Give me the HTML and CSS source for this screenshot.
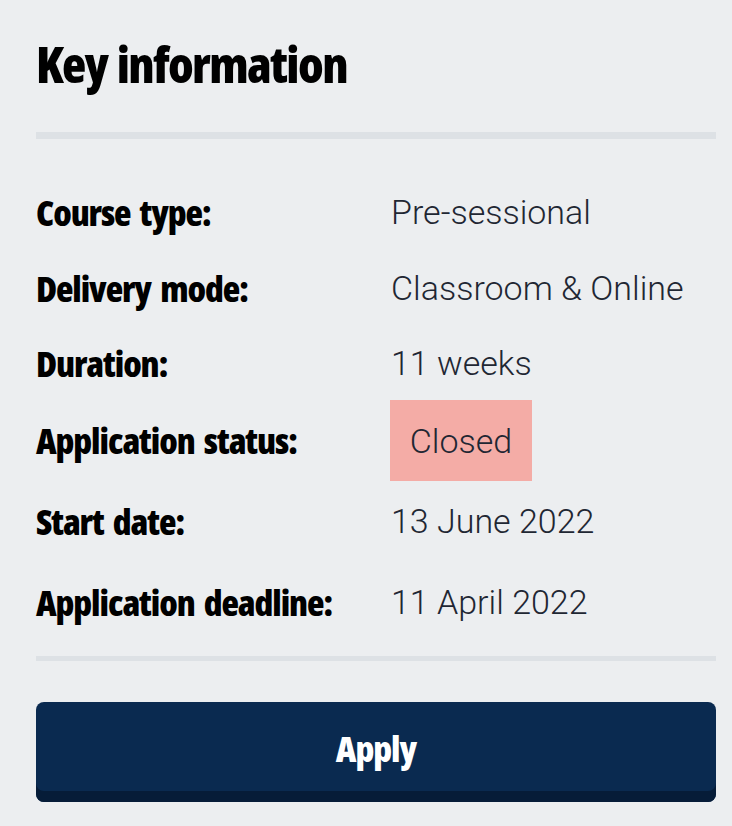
FILE: index.html
```html
<!DOCTYPE html>
<html lang="en">
<head>
<meta charset="utf-8">
<title>Key information</title>
<link rel="stylesheet" href="styles.css">
</head>
<body>
<section class="card">
  <h2 class="title">Key information</h2>
  <hr class="divider divider-top">
  <dl class="facts">
    <div class="row"><dt>Course type:</dt><dd>Pre-sessional</dd></div>
    <div class="row"><dt>Delivery mode:</dt><dd>Classroom &amp; Online</dd></div>
    <div class="row row-short"><dt>Duration:</dt><dd>11 weeks</dd></div>
    <div class="row row-status"><dt>Application status:</dt><dd><span class="badge">Closed</span></dd></div>
    <div class="row row-tall"><dt>Start date:</dt><dd>13 June 2022</dd></div>
    <div class="row row-taller"><dt>Application deadline:</dt><dd>11 April 2022</dd></div>
  </dl>
  <hr class="divider divider-bottom">
  <button class="apply" type="button">Apply</button>
</section>
</body>
</html>
```
FILE: styles.css
```css
html, body {
  margin: 0;
  padding: 0;
  background: #eceef0;
}
body {
  width: 732px;
  height: 826px;
  overflow: hidden;
}
.card {
  padding: 36px 16px 0 36px;
  display: flex;
  flex-direction: column;
}
.title {
  margin: 0;
  font-family: "Open Sans", "DejaVu Sans Condensed", sans-serif;
  font-stretch: 75%;
  font-weight: 800;
  font-size: 50px;
  line-height: 56px;
  color: #000;
  letter-spacing: -1.6px;
  word-spacing: 2px;
}
.divider {
  border: 0;
  background: #dde1e5;
  margin: 0;
}
.divider-top {
  height: 7px;
  margin-top: 40px;
}
.facts {
  margin: 35px 0 0 0;
  padding: 0;
}
.row {
  display: grid;
  grid-template-columns: 355px 1fr;
  align-items: center;
  height: 76px;
}
.row-short { height: 74px; }
.row-status { height: 81px; }
.row-tall { height: 80px; }
.row-taller { height: 82px; }
dt {
  font-family: "Open Sans", "DejaVu Sans Condensed", sans-serif;
  font-stretch: 75%;
  font-weight: 800;
  font-size: 36px;
  color: #000;
  letter-spacing: -1.1px;
  word-spacing: 4px;
}
dd {
  margin: 0;
  font-family: Roboto, "Liberation Sans", sans-serif;
  font-weight: 300;
  font-size: 34px;
  color: #1f2733;
}
.badge {
  display: inline-flex;
  align-items: center;
  justify-content: center;
  width: 142px;
  height: 81px;
  margin-left: -1px;
  background: #f4aca6;
}
.divider-bottom {
  height: 5px;
  margin-top: 13px;
}
.apply {
  margin-top: 41px;
  height: 100px;
  border: 0;
  border-radius: 8px;
  background: #0a2a50;
  box-shadow: inset 0 -11px 0 #061c38;
  color: #fff;
  font-family: "Open Sans", "DejaVu Sans Condensed", sans-serif;
  font-stretch: 75%;
  font-weight: 800;
  font-size: 36px;
  letter-spacing: -1px;
  padding: 0 0 8px 0;
  cursor: pointer;
}
```
